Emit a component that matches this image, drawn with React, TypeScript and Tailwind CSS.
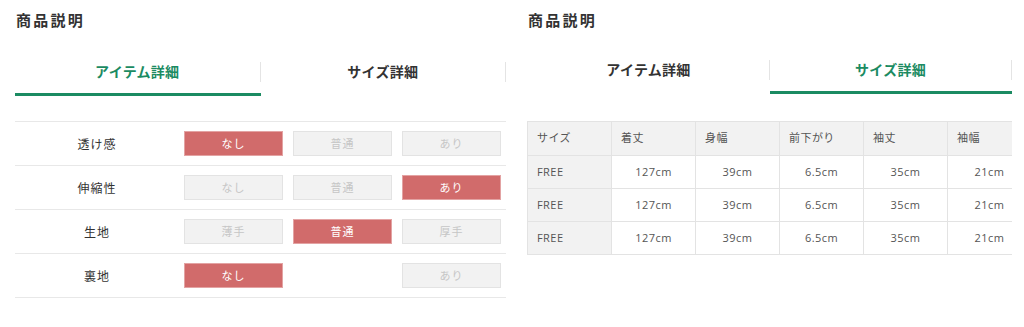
import React from "react";

const font = { fontFamily: '"Noto Sans CJK JP", "Noto Sans", sans-serif' };
const tableFont = { fontFamily: '"Open Sans", "Noto Sans CJK JP", sans-serif' };

type Opt = { t: string; on: boolean } | null;

const rows: { label: string; opts: Opt[] }[] = [
  { label: "透け感", opts: [{ t: "なし", on: true }, { t: "普通", on: false }, { t: "あり", on: false }] },
  { label: "伸縮性", opts: [{ t: "なし", on: false }, { t: "普通", on: false }, { t: "あり", on: true }] },
  { label: "生地", opts: [{ t: "薄手", on: false }, { t: "普通", on: true }, { t: "厚手", on: false }] },
  { label: "裏地", opts: [{ t: "なし", on: true }, null, { t: "あり", on: false }] },
];

function Tabs({ active }: { active: number }) {
  const names = ["アイテム詳細", "サイズ詳細"];
  return (
    <div className="flex">
      {names.map((n, i) => (
        <div key={n} className="flex-1 flex flex-col">
          <div className="h-[43px] flex items-center">
            <div
              className={
                "flex-1 text-center text-[14px] font-bold tracking-[0.02em] " +
                (i === active ? "text-[#1b8b62]" : "text-[#333]")
              }
            >
              {n}
            </div>
            <div className="w-px h-[20px] bg-[#e4e4e4]" />
          </div>
          <div className={"h-[3px] " + (i === active ? "bg-[#1b8b62]" : "bg-transparent")} />
        </div>
      ))}
    </div>
  );
}

function Heading() {
  return (
    <div className="pt-[10px] h-[50px]">
      <div className="text-[15px] leading-[20px] font-bold tracking-[0.15em] text-[#333]">商品説明</div>
    </div>
  );
}

const cols = ["サイズ", "着丈", "身幅", "前下がり", "袖丈", "袖幅"];
const vals = ["FREE", "127cm", "39cm", "6.5cm", "35cm", "21cm"];

export default function App() {
  return (
    <div className="w-[1024px] h-[327px] bg-white flex" style={font}>
      <div className="ml-[15px] w-[491px]">
        <div className="pl-[1px]">
          <Heading />
        </div>
        <Tabs active={0} />
        <div className="mt-[25px] border-t border-[#e8e8e8]">
          {rows.map((r) => (
            <div key={r.label} className="h-[44px] border-b border-[#e8e8e8] flex items-center">
              <div className="w-[164px] text-center text-[12px] tracking-[0.08em] text-[#333]">{r.label}</div>
              <div className="ml-[5px] grid grid-cols-[99px_99px_99px] gap-[10px]">
                {r.opts.map((o, i) =>
                  o ? (
                    <div
                      key={i}
                      className={
                        "h-[25px] flex items-center justify-center text-[11px] tracking-[0.1em] border " +
                        (o.on
                          ? "bg-[#d16b6b] border-[#e3a3a3] text-white"
                          : "bg-[#f2f2f2] border-[#e3e3e3] text-[#c6c6c6]")
                      }
                    >
                      {o.t}
                    </div>
                  ) : (
                    <div key={i} />
                  )
                )}
              </div>
            </div>
          ))}
        </div>
      </div>
      <div className="ml-[22px] w-[484px]">
        <Heading />
        <div className="-mt-[2px]">
          <Tabs active={1} />
        </div>
        <div className="mt-[27px] -ml-[1px] overflow-hidden" style={tableFont}>
          <table className="border-collapse text-[11px] tracking-[0.04em] text-[#555] table-fixed w-[505px]">
            <thead>
              <tr className="h-[34px] bg-[#f2f2f2]">
                {cols.map((c) => (
                  <th key={c} className="w-[84px] border border-[#e3e3e3] text-left font-normal pl-[9px]">
                    {c}
                  </th>
                ))}
              </tr>
            </thead>
            <tbody>
              {[0, 1, 2].map((r) => (
                <tr key={r} className="h-[33px]">
                  {vals.map((v, i) => (
                    <td
                      key={i}
                      className={
                        "border border-[#e3e3e3] " +
                        (i === 0 ? "bg-[#f2f2f2] text-left pl-[9px]" : "text-center bg-white")
                      }
                    >
                      {v}
                    </td>
                  ))}
                </tr>
              ))}
            </tbody>
          </table>
        </div>
      </div>
    </div>
  );
}
